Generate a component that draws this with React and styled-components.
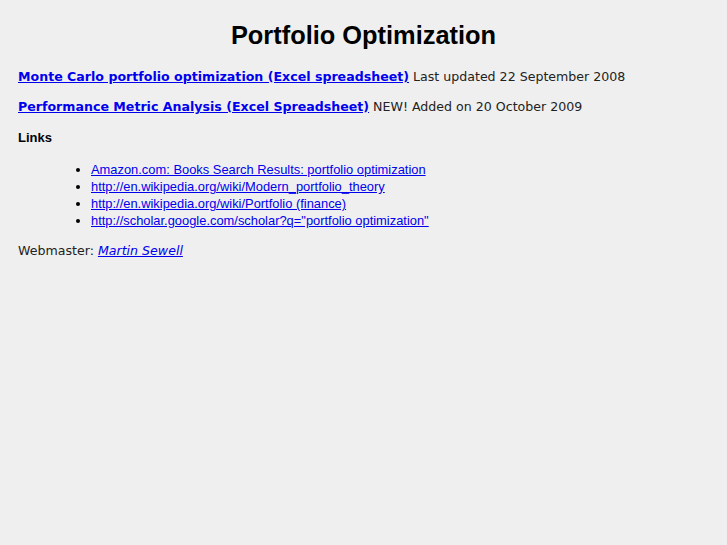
import React from "react"
import styled, { createGlobalStyle } from "styled-components"

const GlobalStyle = createGlobalStyle`
  html, body {
    margin: 0;
    background: #efefef;
  }
  body {
    padding: 8px 18px;
    font-family: "DejaVu Sans", sans-serif;
    font-size: 12.6px;
    color: #222;
  }
`

const Title = styled.h1`
  font-family: "Liberation Sans", Arial, sans-serif;
  font-size: 25.4px;
  font-weight: bold;
  color: #000;
  text-align: center;
  margin: 13px 0 19px;
`

const Para = styled.p`
  margin: 0 0 14px;
  line-height: 16px;
  a {
    color: #0000ee;
    font-weight: bold;
  }
`

const Heading = styled.h4`
  font-family: "Liberation Sans", Arial, sans-serif;
  font-size: 13px;
  font-weight: bold;
  color: #000;
  margin: 15px 0 16px;
`

const LinkList = styled.ul`
  font-family: "Liberation Sans", Arial, sans-serif;
  font-size: 12.9px;
  line-height: 17px;
  margin: 0 0 14px;
  padding-left: 73px;
  color: #000;
  a {
    color: #0000ee;
  }
`

const Footer = styled.p`
  margin: 0;
  line-height: 16px;
  a {
    color: #0000ee;
    font-style: italic;
  }
`

const links = [
  "Amazon.com: Books Search Results: portfolio optimization",
  "http://en.wikipedia.org/wiki/Modern_portfolio_theory",
  "http://en.wikipedia.org/wiki/Portfolio (finance)",
  'http://scholar.google.com/scholar?q="portfolio optimization"',
]

const App = () => {
  return (
    <>
      <GlobalStyle />
      <Title>Portfolio Optimization</Title>
      <Para>
        <a href="#">Monte Carlo portfolio optimization (Excel spreadsheet)</a>{" "}
        Last updated 22 September 2008
      </Para>
      <Para>
        <a href="#">Performance Metric Analysis (Excel Spreadsheet)</a> NEW!
        Added on 20 October 2009
      </Para>
      <Heading>Links</Heading>
      <LinkList>
        {links.map((l) => (
          <li key={l}>
            <a href="#">{l}</a>
          </li>
        ))}
      </LinkList>
      <Footer>
        Webmaster: <a href="#">Martin Sewell</a>
      </Footer>
    </>
  )
}

export default App
